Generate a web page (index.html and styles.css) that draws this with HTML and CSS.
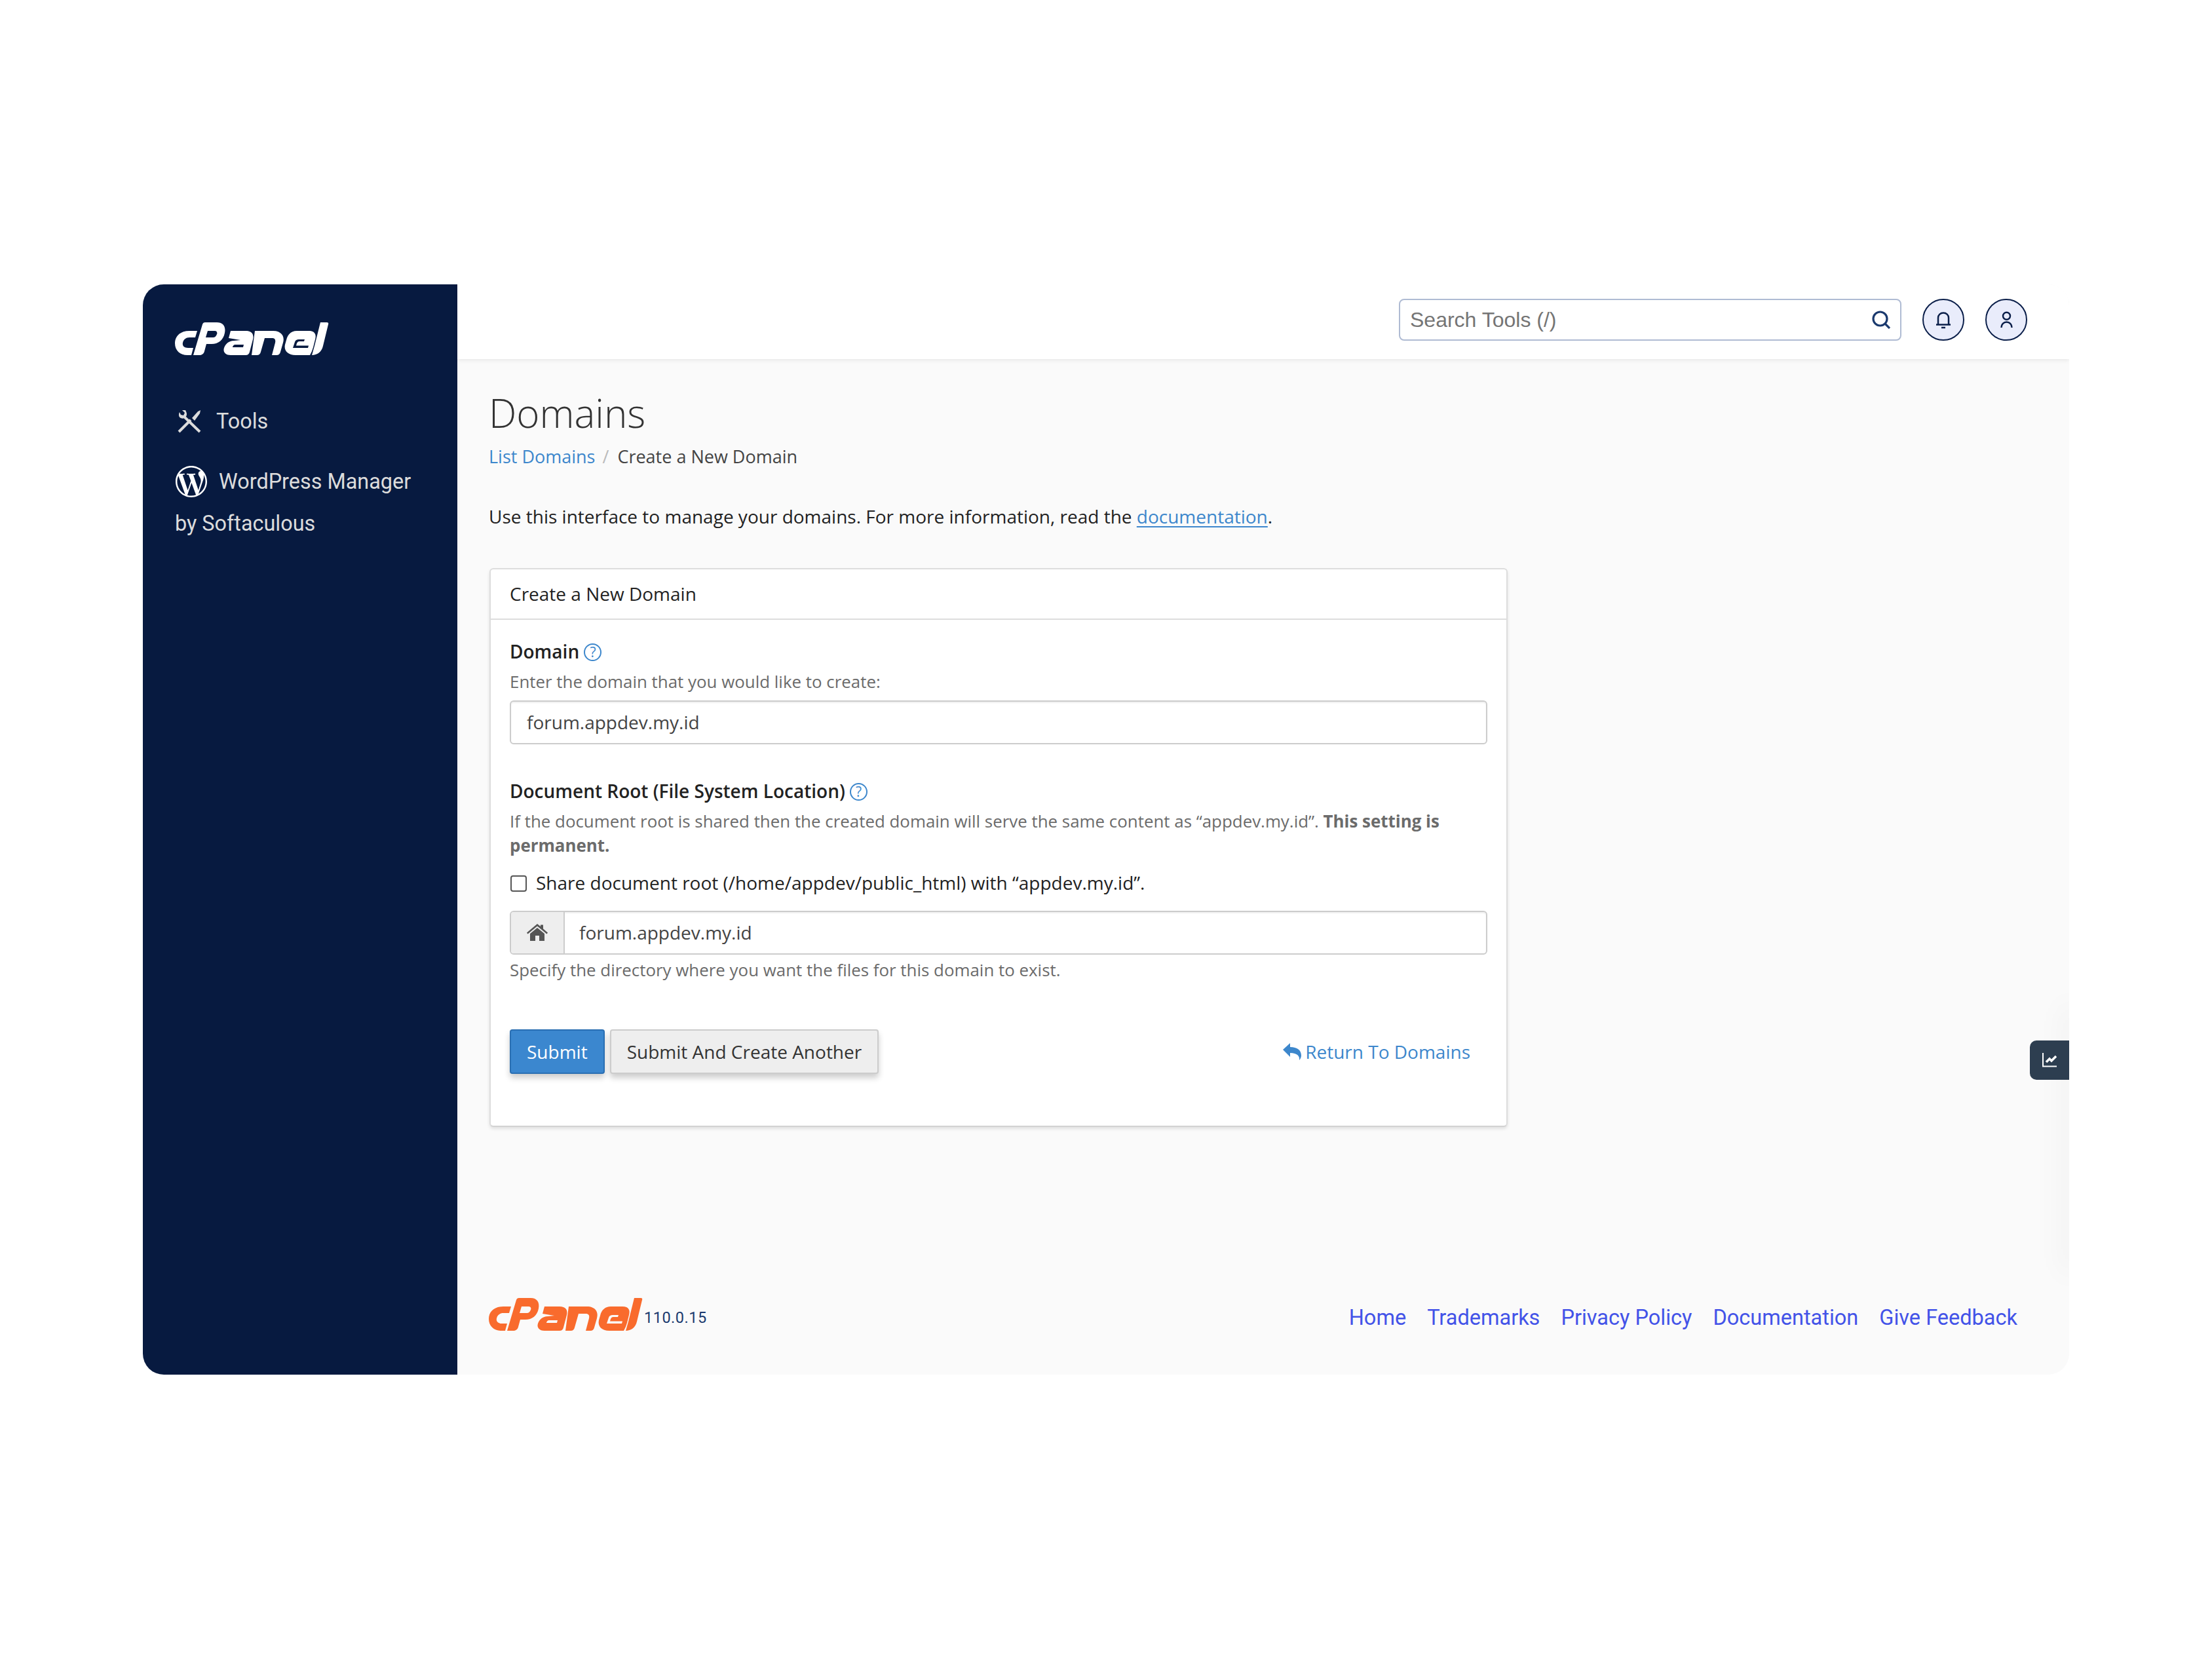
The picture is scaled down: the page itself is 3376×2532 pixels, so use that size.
FILE: index.html
```html
<!DOCTYPE html>
<html lang="en">
<head>
<meta charset="utf-8">
<title>Domains - cPanel</title>
<link rel="stylesheet" href="styles.css">
</head>
<body>
<svg class="defs" width="0" height="0" aria-hidden="true">
  <symbol id="cpanel-logo" viewBox="0 0 235 50">
    <path d="M34 13L22 13C8 13 0 21 0 32C0 43 8 50 19 50L25 50L28 39L20 39C14 39 11 36 12 31C13 26 17 23 22 23L31 23Z"/>
    <path fill-rule="evenodd" d="M46 0L64 0C73 0 78 6 76 16C74 27 66 33 56 33L48 33L45 44C44 48 41 50 37 50L28 50L42 3Q43 0 46 0ZM50 13L61 13C64 13 65 16 64 18C63 21 61 23 58 23L47 23Z"/>
    <path fill-rule="evenodd" d="M85 13L108 13C117 13 121 18 119 26L114 45Q113 50 108 50L85 50C77 50 73 45 75 39C77 33 82 28 90 28L100 27L82 24ZM88 38L104 38L105 34L92 34C90 34 88 36 88 38Z"/>
    <path d="M122 13L150 13C162 13 168 21 165 31L161 45Q160 50 155 50L148 50L153 31C154 26 152 24 148 24L137 24L131 45Q130 50 125 50L117 50Z"/>
    <path fill-rule="evenodd" d="M186 13L204 13C214 13 216 19 214 26L211 38L209 44L206 50L184 50C172 50 166 43 168 34L170 27C172 18 178 13 186 13ZM180 39L183 30C184 27 186 26 189 26L198 26L197 29L190 29C188 29 187 30 186 32L185 35.500L204 35.500L203 39Z"/>
    <path d="M222 0L232 0Q235 0 234 3L226 36C224 45 217 50 209 50L213 36Z"/>
  </symbol>
</svg>
<div class="app">
  <aside class="sidebar">
    <svg class="brand" aria-label="cPanel"><use href="#cpanel-logo"/></svg>
    <a class="nav-tools" href="#">
      <svg class="tools-icon" viewBox="0 0 36 36">
        <path class="tool-stroke" d="M34 34L9 10"/>
        <path class="tool-wrench" d="M3 4C1 8 2 12 5 13C9 15 14 12 14 7C14 5 13 3 12 1L7 1L11 5L9 9L5 8Z"/>
        <path class="tool-stroke" d="M2 34L20 16"/>
        <path class="tool-driver" d="M22 13L31 3L35 1L34 6L26 17Z"/>
      </svg>
      <span>Tools</span>
    </a>
    <a class="nav-wp" href="#"><svg class="wp-icon" viewBox="0 0 24 24"><path d="M21.469 6.825c.84 1.537 1.318 3.3 1.318 5.175 0 3.979-2.156 7.456-5.363 9.325l3.295-9.527c.615-1.54.82-2.771.82-3.864 0-.405-.026-.78-.07-1.11m-7.981.105c.647-.03 1.232-.105 1.232-.105.582-.075.514-.93-.067-.899 0 0-1.755.135-2.88.135-1.064 0-2.85-.15-2.85-.15-.585-.03-.661.855-.075.885 0 0 .54.061 1.125.09l1.68 4.605-2.37 7.08L5.354 6.9c.649-.03 1.234-.1 1.234-.1.585-.075.516-.93-.065-.896 0 0-1.746.138-2.874.138-.2 0-.438-.008-.69-.015C4.911 3.15 8.235 1.215 12 1.215c2.809 0 5.365 1.072 7.286 2.833-.046-.003-.091-.009-.141-.009-1.06 0-1.812.923-1.812 1.914 0 .89.513 1.643 1.06 2.531.411.72.89 1.643.89 2.977 0 .915-.354 1.994-.821 3.479l-1.075 3.585-3.9-11.61.001.014zM12 22.784c-1.059 0-2.081-.153-3.048-.437l3.237-9.406 3.315 9.087c.024.053.05.101.078.149-1.12.393-2.325.609-3.582.609M1.211 12c0-1.564.336-3.05.935-4.39L7.29 21.709C3.694 19.96 1.212 16.271 1.211 12M12 0C5.385 0 0 5.385 0 12s5.385 12 12 12 12-5.385 12-12S18.615 0 12 0"/></svg>WordPress Manager by Softaculous</a>
  </aside>
  <div class="main">
    <header class="topbar">
      <div class="search">
        <input class="search-input" type="text" placeholder="Search Tools (/)">
        <svg class="search-icon" viewBox="0 0 28 28"><circle cx="12.500" cy="12.500" r="10.500"/><path d="M20 20L27 27"/></svg>
      </div>
      <button class="round-btn" aria-label="Notifications">
        <svg viewBox="0 0 64 64"><path d="M24 39V29C24 24.500 27.500 21.500 32 21.500S40 24.500 40 29V39"/><path d="M21 39.500H43"/><path d="M29 44H35"/></svg>
      </button>
      <button class="round-btn" aria-label="Account">
        <svg viewBox="0 0 64 64"><circle cx="32.500" cy="26.300" r="5.500"/><path d="M24.500 44C24.500 39 28 35.500 32.500 35.500S40.500 39 40.500 44"/></svg>
      </button>
    </header>
    <main class="content">
      <h1 class="page-title">Domains</h1>
      <nav class="breadcrumb"><a href="#">List Domains</a><span class="crumb-sep">/</span><span>Create a New Domain</span></nav>
      <p class="intro">Use this interface to manage your domains. For more information, read the <a href="#">documentation</a>.</p>
      <section class="card">
        <div class="card-head">Create a New Domain</div>
        <form class="card-body">
          <label class="field-label">Domain <span class="help-dot">?</span></label>
          <div class="help-text first">Enter the domain that you would like to create:</div>
          <input class="text-input" type="text" value="forum.appdev.my.id">
          <label class="field-label spaced">Document Root (File System Location) <span class="help-dot">?</span></label>
          <div class="help-text first">If the document root is shared then the created domain will serve the same content as “appdev.my.id”. <b>This setting is permanent.</b></div>
          <label class="check-row"><input class="check" type="checkbox"><span>Share document root (/home/appdev/public_html) with “appdev.my.id”.</span></label>
          <div class="input-group">
            <span class="addon"><svg viewBox="0 0 32 26"><path d="M16 0L21 4V1.500H25V7.500L32 13.500L30.500 15.500L16 3.500L1.500 15.500L0 13.500Z"/><path d="M16 6L27 15V26H19V18H13V26H5V15Z"/></svg></span>
            <input class="group-input" type="text" value="forum.appdev.my.id">
          </div>
          <div class="help-text after">Specify the directory where you want the files for this domain to exist.</div>
          <div class="actions">
            <button class="btn primary" type="button">Submit</button>
            <button class="btn" type="button">Submit And Create Another</button>
            <a class="return" href="#"><svg viewBox="0 0 28 26"><path d="M0 10L11 0V6C22 6 28 11 28 19C28 22 26 25 25 26C26 20 22 15 11 15V21Z"/></svg>Return To Domains</a>
          </div>
        </form>
      </section>
    </main>
    <footer class="footer">
      <div class="foot-brand"><svg class="foot-logo" aria-label="cPanel"><use href="#cpanel-logo"/></svg><span class="version">110.0.15</span></div>
      <nav class="foot-links"><a href="#">Home</a><a href="#">Trademarks</a><a href="#">Privacy Policy</a><a href="#">Documentation</a><a href="#">Give Feedback</a></nav>
    </footer>
    <div class="drawer-shadow"></div>
    <button class="stats-tab" aria-label="Statistics"><svg viewBox="0 0 22 22"><path class="axis" d="M1 0V20.500H22"/><path class="trend" d="M6 14L11 9L14 12L21 5"/></svg></button>
  </div>
</div>
</body>
</html>
```
FILE: styles.css
```css
* { box-sizing: border-box; }
html, body { margin: 0; background: #fff; }
body { padding: 434px 218px 0 218px; font-family: "Open Sans", sans-serif; font-size: 28px; color: #333; }
.defs { position: absolute; }
a { text-decoration: none; color: #3d87cc; }

.app { display: flex; width: 2940px; height: 1664px; border-radius: 32px; overflow: hidden; background: #fafafa; }

.sidebar { width: 480px; flex: none; background: #071a40; padding: 58px 60px 0 49px; }
.brand { display: block; width: 235px; height: 50px; fill: #fff; }
.nav-tools { display: flex; align-items: center; gap: 23px; margin: 69px 0 0 4px; font: 32.400px/64px Roboto, sans-serif; color: #dcdcdc; height: 64px; }
.tools-icon { width: 36px; height: 36px; flex: none; }
.tool-stroke { fill: none; stroke: #dcdcdc; stroke-width: 4; }
.tool-wrench, .tool-driver { fill: #dcdcdc; }
.nav-wp { display: block; margin-top: 28px; font: 32.400px/64px Roboto, sans-serif; color: #dcdcdc; }
.wp-icon { width: 48px; height: 48px; fill: #fff; vertical-align: middle; margin: -5px 18px 0 1px; }

.main { position: relative; flex: 1; min-width: 0; display: flex; flex-direction: column; }
.topbar { height: 114px; flex: none; background: #fff; display: flex; align-items: flex-start; gap: 32px; padding: 22px 64px 0 0; justify-content: flex-end; box-shadow: 0 2px 6px rgba(0,0,0,.08); position: relative; }
.search { position: relative; width: 767px; height: 64px; }
.search-input { display: block; width: 100%; height: 100%; border: 2px solid #afbbd3; border-radius: 8px; padding: 0 60px 0 15px; font: 32px "Liberation Sans", sans-serif; background: #fff; outline: none; }
.search-input::placeholder { color: #757575; opacity: 1; }
.search-icon { position: absolute; right: 17px; top: 18px; width: 28px; height: 28px; fill: none; stroke: #1b3a6e; stroke-width: 3.200; }
.round-btn { width: 64px; height: 64px; padding: 0; border: 2.500px solid #0b1f4a; border-radius: 50%; background: #e9ecfb; display: flex; align-items: center; justify-content: center; }
.round-btn svg { width: 64px; height: 64px; flex: none; fill: none; stroke: #0b1f4a; stroke-width: 2.500; }

.content { flex: 1; padding: 42px 0 0 49px; }
.page-title { margin: 0 0 0 -1px; font-weight: 300; font-size: 60px; line-height: 80px; color: #333; }
.breadcrumb { display: flex; margin: 5px 0 0 -1px; font-size: 27px; line-height: 44px; color: #444; }
.crumb-sep { color: #bbb; margin: 0 13px 0 11px; }
.intro { margin: 47px 0 0 -1px; line-height: 44px; color: #222; }
.intro a { text-decoration: underline; text-underline-offset: 4px; }

.card { width: 1554px; margin-top: 57px; background: #fff; border: 2px solid #ddd; border-bottom-color: #d2d2d2; border-radius: 6px; box-shadow: 0 3px 5px rgba(0,0,0,.1); }
.card-head { height: 77px; border-bottom: 2px solid #ddd; padding: 0 29px; line-height: 75px; color: #222; }
.card-body { display: block; padding: 28px 29px 79px; }
.field-label { display: block; font-weight: 600; line-height: 40px; color: #222; }
.field-label.spaced { margin-top: 51px; }
.help-dot { display: inline-flex; align-items: center; justify-content: center; width: 27px; height: 27px; border: 2px solid #3d87cc; border-radius: 50%; color: #3d87cc; font-size: 21px; font-weight: 400; line-height: 1; vertical-align: 2px; }
.help-text { font-size: 25.900px; line-height: 37.500px; color: #6b6b6b; }
.help-text.first { margin-top: 8px; }
.help-text.after { margin-top: 5px; }
.text-input { display: block; width: 100%; height: 67px; margin-top: 9px; padding: 0 24px; border: 2px solid #ccc; border-radius: 6px; font: 28px "Open Sans", sans-serif; color: #444; background: #fff; box-shadow: inset 0 2px 2px rgba(0,0,0,.06); }
.check-row { display: flex; align-items: center; gap: 14px; margin-top: 17px; line-height: 40px; color: #222; }
.check { width: 25px; height: 25px; margin: 3px 0 0 1px; appearance: none; border: 2px solid #555; border-radius: 4px; background: #fff; flex: none; }
.input-group { display: flex; height: 67px; margin-top: 23px; border: 2px solid #ccc; border-radius: 6px; overflow: hidden; box-shadow: inset 0 2px 2px rgba(0,0,0,.06); }
.addon { width: 82px; flex: none; display: flex; align-items: center; justify-content: center; background: #eee; border-right: 2px solid #ccc; }
.addon svg { width: 32px; height: 26px; fill: #555; }
.group-input { flex: 1; min-width: 0; border: 0; padding: 0 22px; font: 28px "Open Sans", sans-serif; color: #444; background: transparent; }
.actions { display: flex; align-items: center; gap: 8px; margin-top: 72px; }
.btn { height: 68px; padding: 0 24px; border: 2px solid #ccc; border-radius: 4px; background: #eee; color: #333; font: 28px "Open Sans", sans-serif; box-shadow: 0 6px 10px rgba(0,0,0,.2); }
.btn.primary { background: #3b87cf; border-color: #2a6fb3; color: #fff; }
.return { display: flex; align-items: center; gap: 6px; margin: 0 26px 0 auto; }
.return svg { width: 28px; height: 26px; fill: #3d87cc; }

.footer { height: 176px; flex: none; display: flex; align-items: center; justify-content: space-between; padding: 0 79px 0 49px; }
.foot-brand { display: flex; align-items: flex-end; gap: 2px; margin: 0 0 8px -1px; }
.foot-logo { display: block; width: 235px; height: 50px; fill: #f96b2d; }
.version { font: 23.500px/30px Roboto, sans-serif; letter-spacing: .5px; color: #1b3a6e; margin-bottom: 5px; }
.foot-links { display: flex; gap: 32px; padding-top: 2px; font: 32.500px/44px Roboto, sans-serif; }
.foot-links a { color: #4353e8; }

.drawer-shadow { position: absolute; top: 1100px; right: -4px; width: 4px; height: 410px; box-shadow: 0 0 44px rgba(0,0,0,.24); }
.stats-tab { position: absolute; top: 1154px; right: 0; width: 60px; height: 60px; padding: 0; border: 0; border-radius: 10px 0 0 10px; background: #2d3e50; display: flex; align-items: center; justify-content: center; }
.stats-tab svg { width: 22px; height: 22px; fill: none; stroke: #fff; }
.axis { stroke-width: 2; }
.trend { stroke-width: 3.500; }
```
